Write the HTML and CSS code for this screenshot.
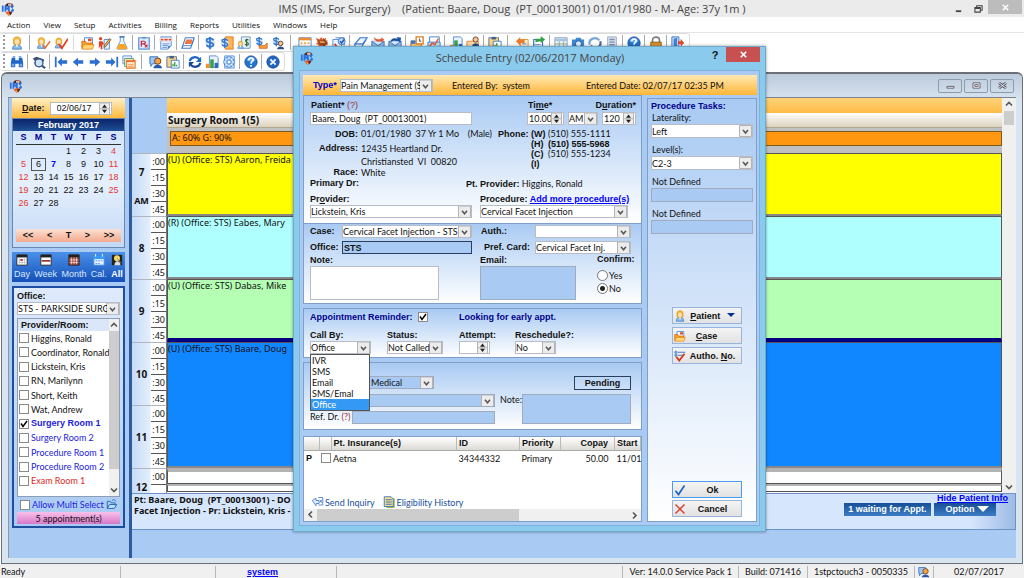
FILE: index.html
```html
<!DOCTYPE html>
<html lang="en">
<head>
<meta charset="utf-8">
<title>IMS (IMS, For Surgery)</title>
<link rel="stylesheet" href="styles.css">
</head>
<body>
<svg class="sprite" aria-hidden="true">
  <symbol id="logo" viewBox="0 0 16 16"><path d="M5 3l3-2 5 1 1 3-9 0z" fill="#3a2a28"/><path d="M8 2h4v3H8z" fill="#f0b8a0"/><path d="M1 4h2v7H1zM4 4h2l1 3 1-3h2v7H8V8l-1 2-1-2v3H4zM15 4h-3l-1 2 2 2-2 2v1h3l1-2-2-2z" fill="#2a6fe0"/><path d="M5 12l5-2 3 2-4 4z" fill="#e8582a"/><path d="M9 12l4-1-2 4z" fill="#3a2a28"/><path d="M7 13h2v2z" fill="#f5c518"/></symbol>
  <symbol id="person" viewBox="0 0 16 16"><path d="M3 15c0-4 2-5 5-5s5 1 5 5z" fill="#8dbbe8" stroke="#3f7fc6"/><path d="M4 9V4c0-4 8-4 8 0v5l-2 1H6z" fill="#f5b82e" stroke="#c98410" stroke-width=".7"/><ellipse cx="8" cy="6.500" rx="2.600" ry="3.200" fill="#fde0b8"/><path d="M6.500 10h3L8 13z" fill="#fff"/></symbol>
  <symbol id="personedit" viewBox="0 0 16 16"><use href="#person" x="-2" width="14" height="16"/><path d="M7 11l2 3 6-8" fill="none" stroke="#e86a2c" stroke-width="1.600"/></symbol>
  <symbol id="personcheck" viewBox="0 0 16 16"><use href="#person" x="-1" width="13" height="16"/><path d="M5 9l4 5 7-11" fill="none" stroke="#e2401c" stroke-width="2"/></symbol>
  <symbol id="folder" viewBox="0 0 16 16"><path d="M4 2h9v8H4z" fill="#fff" stroke="#3f7fd0"/><path d="M8 3h4v3H8z" fill="#e04b2c"/><path d="M1 6h4l1 2h7v6H1z" fill="#f5a623" stroke="#d8631a"/><path d="M3 10h12l-2 5H1z" fill="#ffd873" stroke="#e07a1e" stroke-width=".8"/></symbol>
  <symbol id="runpencil" viewBox="0 0 16 16"><circle cx="3" cy="3" r="1.800" fill="#e2401c"/><path d="M1 6h4l2 3-2 1v5H3v-4l-2 3z" fill="#e2401c"/><path d="M7 4h6v11H7z" fill="#eaf2ff" stroke="#4a86d8"/><path d="M7 11l6-8 2 1-6 8-2 1z" fill="#f7a530" stroke="#444" stroke-width=".7"/></symbol>
  <symbol id="flask" viewBox="0 0 16 16"><path d="M6 1h4v5l4 8-1 1H3l-1-1 4-8z" fill="#eaf4ff" stroke="#5c8fd0"/><path d="M5 9h6l3 5-1 1H3l-1-1z" fill="#ffa51f"/><path d="M5 1h6" stroke="#3e74b8" stroke-width="1.500"/></symbol>
  <symbol id="rx" viewBox="0 0 16 16"><path d="M2 2h12v13H2z" fill="#dbe9fb" stroke="#5d93d8" stroke-width="1.400"/><path d="M6 1h4v2H6z" fill="#5d93d8"/><path d="M5 12V6h3c2 0 2 3 0 3H5m3 0l4 4m0-3l-3 3" fill="none" stroke="#c8283c" stroke-width="1.400"/></symbol>
  <symbol id="doc" viewBox="0 0 16 16"><path d="M2 1h12v10l-4 4H2z" fill="#eef4ff" stroke="#4c84d4"/><path d="M1 2h14v4H1z" fill="#fff" stroke="#9cb8e0" stroke-width=".5"/><path d="M2 4h3m1 0h4m1 0h3" stroke="#e0452c" stroke-width="2"/><path d="M4 9h8M4 11h6M4 13h5" stroke="#4c84d4"/><path d="M10 15v-4h4z" fill="#4c84d4"/></symbol>
  <symbol id="book" viewBox="0 0 16 16"><path d="M5 2h10l-4 12H1z" fill="#fff" stroke="#3f7fd0" stroke-width="1.200"/><path d="M6 4h7l-1 5H4z" fill="#ee7740"/><path d="M1 14l2-3h9l3-8" fill="none" stroke="#3f7fd0"/></symbol>
  <symbol id="dollar" viewBox="0 0 16 16"><path d="M8 0l6 8-6 8-6-8z" fill="#cfe3fb"/><path d="M12 5c-1-3-8-3-8 0s8 2 8 5-7 3-8 0M8 1v14" fill="none" stroke="#2f76cf" stroke-width="1.900"/></symbol>
  <symbol id="dollardoc" viewBox="0 0 16 16"><path d="M6 1h9v14H6z" fill="#ffb552" stroke="#e0701c"/><use href="#dollar" x="-1" y="1" width="13" height="14"/></symbol>
  <symbol id="dollarperson" viewBox="0 0 16 16"><path d="M5 1h10v13H5z" fill="#e9f1fc" stroke="#6c8fbd"/><path d="M13 5c-1-2-4-1-3 1s3 1 3 3-3 2-4 0M11 3v9" fill="none" stroke="#246b34" stroke-width="1.200"/><use href="#person" x="-1" y="5" width="10" height="10"/></symbol>
  <symbol id="dollarhand" viewBox="0 0 16 16"><use href="#dollar" width="12" height="13"/><path d="M6 11h6l3-3v6H6z" fill="#f6a343" stroke="#d8631a"/></symbol>
  <symbol id="dollarman" viewBox="0 0 16 16"><use href="#dollar" width="12" height="13"/><path d="M7 15c0-4 8-4 8 0z" fill="#2d4f86"/><circle cx="11" cy="8.500" r="2.600" fill="#f8c495" stroke="#5b3820"/></symbol>
  <symbol id="calendar" viewBox="0 0 16 16"><path d="M1 2h14v12H1z" fill="#fff" stroke="#4c84d4"/><path d="M1 2h14v3H1z" fill="#ee8a30"/><path d="M3 7h2v2H3zm4 0h2v2H7zm4 0h2v2h-2zM3 11h2v2H3zm4 0h2v2H7z" fill="#f0a23c"/></symbol>
  <symbol id="sparks" viewBox="0 0 16 16"><path d="M1 2l4 2 2-3 2 3 4-2-1 3h3l-3 3 3 2-4 1 2 4-5-2-4 2v-5l-3-1 2-2z" fill="#e4572e"/><path d="M3 5h6V2l6 6-6 5v-3H5z" fill="#8a4a22"/><path d="M5 6h5l2 2H6z" fill="#f5a040"/></symbol>
  <symbol id="clipcheck" viewBox="0 0 16 16"><path d="M1 4h10v11H1zM4 2h10v9" fill="#eef5ff" stroke="#4c84d4"/><circle cx="11" cy="6" r="4" fill="#bcd9fa" stroke="#3172cc"/><path d="M9 6l2 2 3-4" fill="none" stroke="#1c4f9c" stroke-width="1.500"/><path d="M3 9l3 4" stroke="#e2401c" stroke-width="2"/></symbol>
  <symbol id="eraser" viewBox="0 0 16 16"><path d="M7 2h8l-5 7H1zM1 9v3h8l5-8" fill="#e6f1ff" stroke="#3a78cc" stroke-width="1.400"/></symbol>
  <symbol id="mail" viewBox="0 0 16 16"><path d="M1 6h14v9H1z" fill="#8fbdf0" stroke="#2e6cc0"/><path d="M1 6l7 5 7-5" fill="#d8e9fc" stroke="#2e6cc0"/><path d="M3 1c3 3 5 3 9 2l-1-2 4 3-3 4v-2C8 7 4 6 3 1z" fill="#e4572e"/></symbol>
  <symbol id="mailblue" viewBox="0 0 16 16"><path d="M1 6h14v9H1z" fill="#8fbdf0" stroke="#2e6cc0"/><path d="M1 6l7 5 7-5" fill="#d8e9fc" stroke="#2e6cc0"/><path d="M3 7c0-5 5-5 8-4l-1-2 5 1-1 5-2-1C8 5 6 5 3 7z" fill="#1c4f9c"/></symbol>
  <symbol id="folderclock" viewBox="0 0 16 16"><path d="M1 6h12v8H1z" fill="#ffd27a" stroke="#d8631a"/><path d="M7 1h8v8H7z" fill="#fff" stroke="#e07a1e" stroke-width="1.500"/><path d="M11 3v3h2" stroke="#333" fill="none"/><path d="M1 5h5v4H1z" fill="#3a78cc"/></symbol>
  <symbol id="mailchart" viewBox="0 0 16 16"><path d="M3 1h11v13H3z" fill="#fff" stroke="#3a78cc"/><path d="M1 7h14v8H1z" fill="#bfe0f8" stroke="#3a78cc"/><path d="M3 12l3-4 3 2 4-7" fill="none" stroke="#e4572e" stroke-width="1.600"/></symbol>
  <symbol id="chart" viewBox="0 0 16 16"><path d="M5 1h8l2 2v11H5z" fill="#eaf2fd" stroke="#4c84d4"/><path d="M1 10h4v5H1z" fill="#f0932c"/><path d="M6 5h4v10H6z" fill="#36a14a"/><path d="M11 9h4v6h-4z" fill="#2e6cc0"/></symbol>
  <symbol id="card" viewBox="0 0 16 16"><path d="M1 6h13v8H1z" fill="#ffd9a8" stroke="#e07a1e"/><path d="M7 12c0-5 8-5 8 0z" fill="#2d4f86"/><circle cx="11" cy="4" r="3" fill="#f8c495" stroke="#5b3820"/></symbol>
  <symbol id="clip" viewBox="0 0 16 16"><path d="M1 2h11v12H1z" fill="#ffd37a" stroke="#4c6c9c"/><path d="M4 1h5v3H4z" fill="#43618e"/><path d="M6 6h9v9H6z" fill="#fff" stroke="#3a78cc"/><path d="M8 13v-3m2 3V8m2 5v-2" stroke="#36a14a" stroke-width="1.500"/></symbol>
  <symbol id="undo" viewBox="0 0 16 16"><path d="M6 4h9v11H6z" fill="#fff0d8" stroke="#e08a2c"/><path d="M1 6l5-5v3h5v4H6v3z" fill="#ee7a2c"/><path d="M8 9h5m-5 3h5" stroke="#3a78cc"/></symbol>
  <symbol id="redo" viewBox="0 0 16 16"><path d="M2 4h10v11H2z" fill="#fff" stroke="#3a78cc" stroke-width="1.400"/><path d="M4 7V3h6V0l5 4-5 4V6z" fill="#35a04a"/><path d="M3 10h7m-7 3h7" stroke="#3a78cc"/></symbol>
  <symbol id="table" viewBox="0 0 16 16"><path d="M1 2h14v12H1z" fill="#eef5fb" stroke="#7f9cbd"/><path d="M1 3h14v3H1z" fill="#a8c4dd"/><path d="M1 9h14M6 6v8m5-8v8" stroke="#8bab90"/></symbol>
  <symbol id="camera" viewBox="0 0 16 16"><path d="M1 4h4l1-2h5l1 2h3v10H1z" fill="#3b86cf"/><circle cx="8.500" cy="9" r="3.500" fill="#d8ecff" stroke="#1f4f8a"/></symbol>
  <symbol id="swirl" viewBox="0 0 16 16"><path d="M2 10c-2-7 7-10 11-5" fill="none" stroke="#7ba7d8" stroke-width="2.500"/><path d="M14 6c2 7-6 10-11 5" fill="none" stroke="#506f98" stroke-width="2.500"/></symbol>
  <symbol id="sheet" viewBox="0 0 16 16"><path d="M3 1h10v14H3z" fill="#d6e0ec" stroke="#9aabc0"/><path d="M5 4h6M5 7h6M5 10h6" stroke="#7890b0" stroke-width="1.500"/></symbol>
  <symbol id="help" viewBox="0 0 16 16"><circle cx="8" cy="8" r="7" fill="#2272cf" stroke="#184a96"/><path d="M3 6c1-5 9-5 10 0-3 2-7 2-10 0z" fill="#6fb1f0"/><path d="M5.500 6c0-4 5.500-3 5 0-.5 2-2.500 1.500-2.500 4" fill="none" stroke="#fff" stroke-width="1.800"/><path d="M7 11.500h2v2H7z" fill="#fff"/></symbol>
  <symbol id="lock" viewBox="0 0 16 16"><path d="M4 8V5c0-5 8-5 8 0v3" fill="none" stroke="#7a7a7a" stroke-width="1.800"/><path d="M2 7h12v8H2z" fill="#d8942e" stroke="#8a5a18"/></symbol>
  <symbol id="exit" viewBox="0 0 16 16"><path d="M1 1h8v14H1z" fill="#cfe2fa" stroke="#2e6cc0"/><path d="M3 3l4-1v13l-4-1z" fill="#3f83d8"/><path d="M8 6h3V3l4 5-4 4V9H8z" fill="#e4462c"/></symbol>
  <symbol id="binoc" viewBox="0 0 16 16"><path d="M2 3h4v3h4V3h4l1 6v5h-5v-4H6v4H1V9z" fill="#1f66c8"/><path d="M3 1h3v2H3zm7 0h3v2h-3zM2 10h3v3H2zm9 0h3v3h-3z" fill="#74abee"/></symbol>
  <symbol id="lens" viewBox="0 0 16 16"><path d="M1 4l4-2 9 3-1 3-8 1z" fill="#3a4f78"/><path d="M2 8l10 1-2 5-6-1z" fill="#5f86bd"/><circle cx="8" cy="9" r="4.500" fill="#cfe2f6" stroke="#33507f" stroke-width="1.400"/><path d="M11 12l4 3" stroke="#33507f" stroke-width="2.400"/></symbol>
  <symbol id="first" viewBox="0 0 16 16"><path d="M2 2v12" stroke="#2a6fd2" stroke-width="2"/><path d="M4 8l5-5v3h6v4H9v3z" fill="#2a6fd2"/></symbol>
  <symbol id="prev" viewBox="0 0 16 16"><path d="M2 8l6-5v3h6v4H8v3z" fill="#2a6fd2"/></symbol>
  <symbol id="next" viewBox="0 0 16 16"><path d="M14 8L8 3v3H2v4h6v3z" fill="#2a6fd2"/></symbol>
  <symbol id="last" viewBox="0 0 16 16"><path d="M14 2v12" stroke="#2a6fd2" stroke-width="2"/><path d="M12 8L7 3v3H1v4h6v3z" fill="#2a6fd2"/></symbol>
  <symbol id="windows" viewBox="0 0 16 16"><path d="M1 1h10v9H1z" fill="#e6f0fc" stroke="#5c8fd0"/><path d="M3 4h10v9H3z" fill="#fff" stroke="#4a9a5a"/><path d="M5 6h10v9H5z" fill="#ffe3c4" stroke="#e67828" stroke-width="1.200"/><path d="M5 6h10v2H5z" fill="#e67828"/><path d="M7 11h6m-6 2h6" stroke="#e89a50"/></symbol>
  <symbol id="chat" viewBox="0 0 16 16"><path d="M1 2h9v8H4l-2 3v-3H1z" fill="#9cc6f4" stroke="#2e6cc0"/><circle cx="10" cy="7" r="3.600" fill="#f6a343" stroke="#5b3820"/><path d="M5 15c1-5 9-5 10 0z" fill="#245bb0"/></symbol>
  <symbol id="refresh" viewBox="0 0 16 16"><path d="M2 7c1-5 8-6 11-2" fill="none" stroke="#1f66c8" stroke-width="2.600"/><path d="M15 2v6H9z" fill="#1f66c8"/><path d="M14 9c-1 5-8 6-11 2" fill="none" stroke="#164a96" stroke-width="2.600"/><path d="M1 14V8h6z" fill="#164a96"/></symbol>
  <symbol id="globe" viewBox="0 0 16 16"><path d="M3 1h11v14H3z" fill="#d6e8fc" stroke="#5c93dc"/><circle cx="8" cy="8" r="6" fill="#a6cbf5" stroke="#3a78cc"/><path d="M8 2v12M2 8h12M4 4l8 8m0-8l-8 8" stroke="#fff"/><circle cx="8" cy="8" r="2.500" fill="none" stroke="#3a78cc"/></symbol>
  <symbol id="stop" viewBox="0 0 16 16"><circle cx="8" cy="8" r="7" fill="#1f66c8" stroke="#123f88"/><path d="M5 5l6 6m0-6l-6 6" stroke="#fff" stroke-width="2"/></symbol>
  <symbol id="daycal" viewBox="0 0 14 14"><path d="M1 1h12v12H1z" fill="#fff" stroke="#222"/><path d="M1 1h12v3H1z" fill="#222"/><path d="M4 4v8m3-8v8m3-8v8M2 7h10M2 10h10" stroke="#9aa" stroke-width=".6"/><path d="M5 6h3v2H5z" fill="#c33"/></symbol>
  <symbol id="weekcal" viewBox="0 0 14 14"><path d="M1 1h12v12H1z" fill="#fff" stroke="#222"/><path d="M1 1h12v3H1z" fill="#222"/><path d="M2 7h10v2H2z" fill="#a0342c"/></symbol>
  <symbol id="monthcal" viewBox="0 0 14 14"><path d="M1 1h12v12H1z" fill="#a9453a" stroke="#222"/><path d="M1 1h12v3H1z" fill="#222"/><path d="M4 4v8m3-8v8m3-8v8M2 7h10M2 10h10" stroke="#fff" stroke-width=".7"/></symbol>
  <symbol id="bluecal" viewBox="0 0 14 14"><path d="M1 3h12v10H1z" fill="#eaf4ff" stroke="#3b8cf0"/><path d="M1 2h12v4H1z" fill="#3b9af8"/><path d="M3 0v3m8-3v3" stroke="#fff"/><path d="M3 8h2m1 0h2m1 0h2M3 11h2m1 0h2" stroke="#3b8cf0"/></symbol>
  <symbol id="allcal" viewBox="0 0 14 14"><path d="M1 1h12v12H1z" fill="#222"/><circle cx="7" cy="5" r="3.500" fill="#f6d860"/><path d="M4 13c0-6 7-6 7 0z" fill="#ddd"/><path d="M7 5l5 6" stroke="#888"/></symbol>
  <symbol id="openfolder" viewBox="0 0 14 14"><path d="M1 3h4l1 2h5v3M1 3v9l3-5h9l-3 5H1" fill="#bfe0fa" stroke="#1f66b8" stroke-width="1.200"/><path d="M7 2c2-2 4-1 5 1" fill="none" stroke="#1f66b8"/></symbol>
  <symbol id="taskcheck" viewBox="0 0 16 16"><path d="M5 3h10M5 7h7" stroke="#4c7fc0" stroke-width="1.500"/><circle cx="2.500" cy="3" r="1.500" fill="#9cc6f4" stroke="#2e6cc0"/><circle cx="2.500" cy="7" r="1.500" fill="#9cc6f4" stroke="#2e6cc0"/><path d="M3 9l4 5 7-9" fill="none" stroke="#d0341c" stroke-width="2.400"/></symbol>
  <symbol id="okcheck" viewBox="0 0 16 16"><path d="M2 9l4 5 8-12" fill="none" stroke="#1c62c4" stroke-width="2.200"/></symbol>
  <symbol id="cross" viewBox="0 0 16 16"><path d="M2 2l12 12M14 2L2 14" stroke="#d8402c" stroke-width="1.900"/></symbol>
  <symbol id="inquiry" viewBox="0 0 16 16"><path d="M1 6l5-3v3h4v4H6v3z" fill="#e4f0ff" stroke="#2e6cd0"/><path d="M9 2h6v10H9M11 5l3 4m0-4l-3 4" fill="none" stroke="#2e6cd0"/></symbol>
  <symbol id="history" viewBox="0 0 16 16"><path d="M4 3h11v13H4z" fill="#9bbf5a"/><path d="M1 1h9l3 3v10H1z" fill="#fbe08a" stroke="#356fc0" stroke-width="1.200"/><path d="M3 5h8M3 8h8M3 11h8" stroke="#356fc0" stroke-width="1.300"/></symbol>
</svg>

<header class="titlebar">
  <svg class="app-logo"><use href="#logo"/></svg>
  <h1>IMS (IMS, For Surgery) &nbsp;&nbsp; (Patient: Baare, Doug &nbsp;(PT_00013001) 01/01/1980 - M- Age: 37y 1m )</h1>
  <div class="window-buttons">
    <button aria-label="Minimize"><svg viewBox="0 0 10 10"><path d="M2 8h6" stroke="#444" stroke-width="2"/></svg></button>
    <button aria-label="Restore"><svg viewBox="0 0 10 10"><path d="M1 4h6v5H1zM3 4V2h6v5H7M1 5h6" fill="none" stroke="#444" stroke-width="1.200"/></svg></button>
    <button class="close" aria-label="Close"><svg viewBox="0 0 10 10"><path d="M2 2l6 6M8 2L2 8" stroke="#fff" stroke-width="1.600"/></svg></button>
  </div>
</header>

<nav class="menubar">
  <button>Action</button><button>View</button><button>Setup</button><button>Activities</button><button>Billing</button><button>Reports</button><button>Utilities</button><button>Windows</button><button>Help</button>
</nav>

<div class="toolbars">
  <div class="toolbar" role="toolbar" aria-label="Main">
    <button aria-label="Patient"><svg><use href="#person"/></svg></button><i class="wide"></i>
    <button aria-label="Edit patient"><svg><use href="#personedit"/></svg></button>
    <button aria-label="Check in"><svg><use href="#personcheck"/></svg></button><i class="wide none"></i>
    <button aria-label="Case folder"><svg><use href="#folder"/></svg></button>
    <button aria-label="Visit"><svg><use href="#runpencil"/></svg></button>
    <button aria-label="Lab"><svg><use href="#flask"/></svg></button><i></i>
    <button aria-label="Prescription"><svg><use href="#rx"/></svg></button><i></i>
    <button aria-label="Document"><svg><use href="#doc"/></svg></button><i></i>
    <button aria-label="Notes"><svg><use href="#book"/></svg></button><i></i>
    <button aria-label="Charge"><svg><use href="#dollar"/></svg></button>
    <button aria-label="Bill"><svg><use href="#dollardoc"/></svg></button>
    <button aria-label="Account"><svg><use href="#dollarperson"/></svg></button>
    <button aria-label="Payment"><svg><use href="#dollarhand"/></svg></button>
    <button aria-label="Payer"><svg><use href="#dollarman"/></svg></button><i class="wide"></i>
    <button aria-label="Schedule"><svg><use href="#calendar"/></svg></button>
    <button aria-label="Tasks"><svg><use href="#sparks"/></svg></button>
    <button aria-label="Review"><svg><use href="#clipcheck"/></svg></button><i></i>
    <button aria-label="Erase"><svg><use href="#eraser"/></svg></button>
    <button aria-label="Inbox"><svg><use href="#mail"/></svg></button>
    <button aria-label="Outbox"><svg><use href="#mailblue"/></svg></button><i></i>
    <button aria-label="Reminder"><svg><use href="#folderclock"/></svg></button>
    <button aria-label="Mail chart"><svg><use href="#mailchart"/></svg></button><i></i>
    <button aria-label="Reports"><svg><use href="#chart"/></svg></button>
    <button aria-label="Card"><svg><use href="#card"/></svg></button><i></i>
    <button aria-label="Clipboard"><svg><use href="#clip"/></svg></button><i class="wide"></i>
    <button aria-label="Import"><svg><use href="#undo"/></svg></button>
    <button aria-label="Export"><svg><use href="#redo"/></svg></button><i></i>
    <button aria-label="Table"><svg><use href="#table"/></svg></button>
    <button aria-label="Camera"><svg><use href="#camera"/></svg></button>
    <button aria-label="Sync"><svg><use href="#swirl"/></svg></button>
    <button aria-label="Sheet"><svg><use href="#sheet"/></svg></button><i></i>
    <button aria-label="Help"><svg><use href="#help"/></svg></button><i></i>
    <button aria-label="Lock"><svg><use href="#lock"/></svg></button><i></i>
    <button aria-label="Exit"><svg><use href="#exit"/></svg></button>
  </div>
  <div class="toolbar" role="toolbar" aria-label="Schedule">
    <button aria-label="Find"><svg><use href="#binoc"/></svg></button><i></i>
    <button aria-label="Preview"><svg><use href="#lens"/></svg></button><i></i>
    <button aria-label="First"><svg><use href="#first"/></svg></button>
    <button aria-label="Previous"><svg><use href="#prev"/></svg></button>
    <button aria-label="Next"><svg><use href="#next"/></svg></button>
    <button aria-label="Last"><svg><use href="#last"/></svg></button>
    <button aria-label="Windows"><svg><use href="#windows"/></svg></button><i class="wide"></i>
    <button aria-label="Chat"><svg><use href="#chat"/></svg></button>
    <button aria-label="Clipboard"><svg><use href="#clip"/></svg></button><i></i>
    <button aria-label="Refresh"><svg><use href="#refresh"/></svg></button>
    <button aria-label="Chart"><svg><use href="#chart"/></svg></button>
    <button aria-label="Web"><svg><use href="#globe"/></svg></button><i></i>
    <button aria-label="Help"><svg><use href="#help"/></svg></button><i></i>
    <button aria-label="Close view"><svg><use href="#stop"/></svg></button>
  </div>
</div>

<main class="mdi">
  <div class="mdi-title">
    <svg class="app-logo"><use href="#logo"/></svg>
    <div class="mdi-buttons">
      <button aria-label="Minimize view"><svg viewBox="0 0 10 8"><path d="M1 5h8v2H1z" fill="#fff" stroke="#556"/></svg></button>
      <button aria-label="Restore view"><svg viewBox="0 0 10 8"><path d="M1 1h8v6H1zM3 3h4v2H3z" fill="#fff" stroke="#556"/></svg></button>
      <button aria-label="Close child view"><svg viewBox="0 0 10 8"><path d="M1 1l8 6M9 1L1 7" stroke="#556" stroke-width="3"/><path d="M1 1l8 6M9 1L1 7" stroke="#fff"/></svg></button>
    </div>
  </div>
  <div class="workspace">
    <aside class="sidebar">
      <div class="date-bar"><label for="date"><u>D</u>ate:</label><span class="spin"><input id="date" value="02/06/17"></span></div>
      <section class="calendar">
        <h2>February 2017</h2>
        <table>
          <thead><tr><th>S</th><th>M</th><th>T</th><th>W</th><th>T</th><th>F</th><th>S</th></tr></thead>
          <tbody>
            <tr><td></td><td></td><td></td><td>1</td><td>2</td><td>3</td><td>4</td></tr>
            <tr><td>5</td><td class="picked"><span>6</span></td><td class="today">7</td><td>8</td><td>9</td><td>10</td><td>11</td></tr>
            <tr><td>12</td><td>13</td><td>14</td><td>15</td><td>16</td><td>17</td><td>18</td></tr>
            <tr><td>19</td><td>20</td><td>21</td><td>22</td><td>23</td><td>24</td><td>25</td></tr>
            <tr><td>26</td><td>27</td><td>28</td><td></td><td></td><td></td><td></td></tr>
          </tbody>
        </table>
        <div class="cal-nav"><button>&lt;&lt;</button><button>&lt;</button><button>T</button><button>&gt;</button><button>&gt;&gt;</button></div>
      </section>
      <div class="views">
        <button><svg><use href="#daycal"/></svg>Day</button>
        <button><svg><use href="#weekcal"/></svg>Week</button>
        <button><svg><use href="#monthcal"/></svg>Month</button>
        <button><svg><use href="#bluecal"/></svg>Cal.</button>
        <button class="on"><svg><use href="#allcal"/></svg>All</button>
      </div>
      <section class="rooms">
        <label class="b" for="office">Office:</label>
        <select id="office"><option>STS - PARKSIDE SURGICAL</option></select>
        <div class="room-box">
          <div class="room-list">
            <h3>Provider/Room:</h3>
            <label><input type="checkbox">Higgins, Ronald</label>
            <label><input type="checkbox">Coordinator, Ronald</label>
            <label><input type="checkbox">Lickstein, Kris</label>
            <label><input type="checkbox">RN, Marilynn</label>
            <label><input type="checkbox">Short, Keith</label>
            <label><input type="checkbox">Wat, Andrew</label>
            <label class="blue b"><input type="checkbox" checked>Surgery Room 1</label>
            <label class="blue"><input type="checkbox">Surgery Room 2</label>
            <label class="blue"><input type="checkbox">Procedure Room 1</label>
            <label class="blue"><input type="checkbox">Procedure Room 2</label>
            <label class="red"><input type="checkbox">Exam Room 1</label>
          </div>
          <div class="vscroll"><span class="up"></span><span class="thumb"></span><span class="down"></span></div>
        </div>
        <label class="multi blue"><input type="checkbox">Allow Multi Select <svg><use href="#openfolder"/></svg></label>
        <button class="count">5 appointment(s)</button>
      </section>
    </aside>

    <div class="board">
      <div class="schedule">
        <div class="times">
          <div class="corner"></div>
          <div class="hour"><b>7<small>AM</small></b><span>:00</span><span>:15</span><span>:30</span><span>:45</span></div>
          <div class="hour"><b>8</b><span>:00</span><span>:15</span><span>:30</span><span>:45</span></div>
          <div class="hour"><b>9</b><span>:00</span><span>:15</span><span>:30</span><span>:45</span></div>
          <div class="hour"><b>10</b><span>:00</span><span>:15</span><span>:30</span><span>:45</span></div>
          <div class="hour"><b>11</b><span>:00</span><span>:15</span><span>:30</span><span>:45</span></div>
          <div class="hour cut"><b>12</b><span>:00</span></div>
        </div>
        <div class="lane">
          <div class="lane-top"></div>
          <h2>Surgery Room 1(5)</h2>
          <div class="usage"><div>A: 60% G: 90%</div></div>
          <div class="appt yellow">(U) (Office: STS) Aaron, Freida</div>
          <div class="appt cyan">(R) (Office: STS) Eabes, Mary</div>
          <div class="appt green">(U) (Office: STS) Dabas, Mike</div>
          <div class="appt azure">(U) (Office: STS) Baare, Doug</div>
          <div class="slot"></div>
          <div class="slot thin"></div>
        </div>
        <div class="vscroll tall"><span class="up"></span><span class="thumb"></span><span class="down"></span></div>
      </div>
      <div class="info">
        <p>Pt: Baare, Doug &nbsp;(PT_00013001) - DO<br>Facet Injection - Pr: Lickstein, Kris -</p>
        <div class="info-actions">
          <a href="#">Hide Patient Info</a>
          <div><button>1 waiting for Appt.</button><button class="option">Option <span class="tri"></span></button></div>
        </div>
      </div>
      <div class="board-foot"></div>
    </div>
  </div>
</main>

<footer class="status">
  <span class="s1">Ready</span><span class="s2"></span><span class="s3"><a href="#">system</a></span><span class="s4"></span><span>Ver: 14.0.0 Service Pack 1</span><span>Build: 071416</span><span>1stpctouch3 - 0050335</span><span class="s5"><svg><use href="#chat"/></svg></span><span class="s6">02/07/2017</span>
</footer>

<div class="dialog" role="dialog" aria-labelledby="dlg-title">
  <div class="dlg-head">
    <svg class="app-logo"><use href="#logo"/></svg>
    <h2 id="dlg-title">Schedule Entry (02/06/2017 Monday)</h2>
    <button class="ask" aria-label="Help">?</button>
    <button class="close" aria-label="Close dialog"><svg viewBox="0 0 10 10"><path d="M2 2l6 6M8 2L2 8" stroke="#fff" stroke-width="1.800"/></svg></button>
  </div>
  <form class="dlg-body">
    <div class="type-bar">
      <label for="type">Type*</label>
      <select id="type"><option>Pain Management (S)</option></select>
      <span class="by">Entered By:&nbsp; system</span>
      <span>Entered Date: 02/07/17 02:35 PM</span>
    </div>
    <div class="dlg-cols">
      <div class="left">
        <section class="panel who">
          <div class="row-head">
            <div class="field pt"><label for="patient">Patient* <em>(?)</em></label><input id="patient" value="Baare, Doug  (PT_00013001)"></div>
            <div class="field"><label for="time">Ti<u>m</u>e*</label><span class="spin"><input id="time" value="10.00"></span></div>
            <div class="field"><label class="vh" for="ampm">AM/PM</label><select id="ampm"><option>AM</option></select></div>
            <div class="field dur"><label for="dur">D<u>u</u>ration*</label><span class="spin"><input id="dur" value="120"></span></div>
          </div>
          <div class="facts">
            <dl class="person">
              <dt>DOB:</dt><dd>01/01/1980 &nbsp;37 Yr 1 Mo <span>(Male)</span></dd>
              <dt>Address:</dt><dd>12435 Heartland Dr.</dd>
              <dt></dt><dd>Christiansted &nbsp;VI &nbsp;00820</dd>
              <dt>Race:</dt><dd>White</dd>
            </dl>
            <dl class="phones">
              <dt>Phone:</dt><dd><b>(W)</b>(510) 555-1111</dd>
              <dt></dt><dd class="b"><b>(H)</b>(510) 555-5968</dd>
              <dt></dt><dd><b>(C)</b>(510) 555-1234</dd>
              <dt></dt><dd><b>(I)</b></dd>
            </dl>
          </div>
          <div class="drs"><b>Primary Dr:</b><span><b>Pt. Provider:</b> Higgins, Ronald</span></div>
          <div class="row-prov">
            <div class="field"><label for="prov">Pr<u>o</u>vider:</label><select id="prov"><option>Lickstein, Kris</option></select></div>
            <div class="field"><span class="lab"><label for="proc">Procedure:</label> <a href="#">Add more procedure(s)</a></span><select id="proc"><option>Cervical Facet Injection</option></select></div>
          </div>
        </section>

        <section class="panel case">
          <div class="case-grid">
            <label for="case">Case:</label><select id="case"><option>Cervical Facet Injection - STS</option></select>
            <label class="c3" for="auth">Auth.:</label><select id="auth"><option></option></select>
            <label for="off">Office:</label><input id="off" class="sts" value="STS">
            <label class="c3 r" for="pref">Pref. Card:</label><select id="pref"><option>Cervical Facet Inj.</option></select>
          </div>
          <div class="notes">
            <div class="field"><label for="note">Note:</label><textarea id="note"></textarea></div>
            <div class="field"><label for="email">Email:</label><textarea id="email" class="dim"></textarea></div>
            <fieldset><legend>Confirm:</legend><label><input type="radio" name="cf">Yes</label><label><input type="radio" name="cf" checked>No</label></fieldset>
          </div>
        </section>

        <section class="panel remind">
          <div class="remind-top"><label>Appointment Reminder: <input type="checkbox" checked></label><span>Looking for early appt.</span></div>
          <div class="remind-row">
            <div class="field drop">
              <label for="callby">Call By:</label><select id="callby"><option>Office</option></select>
              <ul class="menu" role="listbox" aria-label="Call By options"><li role="option">IVR</li><li role="option">SMS</li><li role="option">Email</li><li role="option">SMS/Emal</li><li role="option" aria-selected="true">Office</li></ul>
            </div>
            <div class="field"><label for="stat">Status:</label><select id="stat"><option>Not Called</option></select></div>
            <div class="field"><label for="att">Attempt:</label><span class="spin"><input id="att" value=""></span></div>
            <div class="field"><label for="res">Reschedule?:</label><select id="res"><option>No</option></select></div>
          </div>
        </section>

        <section class="panel ref">
          <div class="ref-top"><select class="dim" aria-label="Class"><option>Medical</option></select><button type="button" class="pending">Pending</button></div>
          <div class="ref-grid">
            <select class="dim wide" aria-label="Referral"><option></option></select>
            <label class="ref-note" for="rnote">Note:</label><textarea id="rnote" class="dim"></textarea>
            <label class="ref-dr" for="refdr">Ref. Dr. <em>(?)</em></label><input id="refdr" class="dim">
          </div>
        </section>

        <section class="ins">
          <table>
            <thead><tr><th class="k1"></th><th class="k2"></th><th>Pt. Insurance(s)</th><th class="k4">ID</th><th class="k5">Priority</th><th class="k6 num">Copay</th><th class="k7">Start</th></tr></thead>
            <tbody><tr><td><b>P</b></td><td><input type="checkbox" aria-label="Select Aetna"></td><td>Aetna</td><td>34344332</td><td>Primary</td><td class="num">50.00</td><td>11/01</td></tr></tbody>
          </table>
          <div class="ins-links"><a href="#"><svg><use href="#inquiry"/></svg>Send Inquiry</a><a href="#"><svg><use href="#history"/></svg>Eligibility History</a></div>
          <div class="hscroll"><span class="lt"></span><span class="thumb"></span><span class="rt"></span></div>
        </section>
      </div>

      <div class="tasks">
        <h3>Procedure Tasks:</h3>
        <label for="lat">Laterality:</label><select id="lat"><option>Left</option></select>
        <label for="lev">Level(s):</label><select id="lev"><option>C2-3</option></select>
        <label for="nd1">Not Defined</label><input id="nd1" class="dim">
        <label for="nd2">Not Defined</label><input id="nd2" class="dim">
        <div class="task-buttons">
          <button type="button"><svg><use href="#person"/></svg><span><u>P</u>atient <i class="down-tri"></i></span></button>
          <button type="button"><svg><use href="#folder"/></svg><span class="l"><u>C</u>ase</span></button>
          <button type="button"><svg><use href="#taskcheck"/></svg><span>Autho. <u>N</u>o.</span></button>
        </div>
        <div class="ok-buttons">
          <button type="button" class="ok"><svg><use href="#okcheck"/></svg><span>Ok</span></button>
          <button type="button"><svg><use href="#cross"/></svg><span>Cancel</span></button>
        </div>
      </div>
    </div>
  </form>
</div>
</body>
</html>
```
FILE: styles.css
```css
:root {
  --panel: #a9caf3;
  --line: #7f9fc8;
  --bold: bold 9px/11px "Liberation Sans", sans-serif;
  --chev: url("data:image/svg+xml,%3Csvg xmlns='http://www.w3.org/2000/svg' viewBox='0 0 13 12'%3E%3Cpath d='M.5.5h12v11H.5z' fill='%23ececec' stroke='%23b4b4b4'/%3E%3Cpath d='M4 5l2.500 3L9 5' fill='none' stroke='%23555' stroke-width='1.500'/%3E%3C/svg%3E");
  --spin: url("data:image/svg+xml,%3Csvg xmlns='http://www.w3.org/2000/svg' viewBox='0 0 11 12'%3E%3Cpath d='M.5.5h10v11H.5zM1 6h9' fill='%23eee' stroke='%23b4b4b4'/%3E%3Cpath d='M3 5l2.500-3L8 5zM3 7l2.500 3L8 7z' fill='%23222'/%3E%3C/svg%3E");
  --arr: url("data:image/svg+xml,%3Csvg xmlns='http://www.w3.org/2000/svg' viewBox='0 0 10 10'%3E%3Cpath d='M2 6.500L5 3.500l3 3' fill='none' stroke='%23555' stroke-width='1.600'/%3E%3C/svg%3E");
}
* { box-sizing: border-box; }
body { margin: 0; min-height: 100vh; display: flex; flex-direction: column; position: relative; background: #fff; font: 9px/11px Lato, "Liberation Sans", sans-serif; color: #111; overflow-x: hidden; }
h1, h2, h3, p, dl, dd, ul { margin: 0; padding: 0; }
button, input, select, textarea { font: inherit; color: inherit; margin: 0; padding: 0; border-radius: 0; }
button { border: 0; background: none; white-space: nowrap; }
svg { display: block; }
em { font-style: normal; color: #a03030; font-weight: normal; }
a { color: #00f; }
.b, b { font: var(--bold); }
.blue { color: #1c1ce0; }
.red { color: #e0281c; }
.sprite { position: absolute; width: 0; height: 0; }
.app-logo { width: 14px; height: 14px; }

select, input, textarea { border: 1px solid #b8bcc4; background: #fff; }
select { appearance: none; height: 13px; width: 100%; padding: 0 12px 0 0; background: #fff var(--chev) right center / 13px 12px no-repeat; text-overflow: clip; overflow: hidden; }
input { height: 13px; width: 100%; padding: 0 1px; }
textarea { display: block; resize: none; width: 100%; }
.dim { background-color: #a9caf3; border-color: #a0abbf; }
.spin { display: block; height: 13px; background: var(--spin) right 1px center / 11px 12px no-repeat, #fff; border: 1px solid #b8bcc4; }
.spin input { border: 0; height: 11px; width: calc(100% - 12px); background: none; padding: 0 0 0 1px; display: block; }
input[type="checkbox"] { appearance: none; width: 10px; height: 10px; border: 1px solid #8a8a8a; flex: none; }
input[type="checkbox"]:checked { background: #fff url("data:image/svg+xml,%3Csvg xmlns='http://www.w3.org/2000/svg' viewBox='0 0 8 8'%3E%3Cpath d='M1 3.500l2 3L7 1' fill='none' stroke='%23000' stroke-width='1.500'/%3E%3C/svg%3E") center / 8px 8px no-repeat; }
input[type="radio"] { appearance: none; width: 11px; height: 11px; border: 1px solid #777; border-radius: 50%; }
input[type="radio"]:checked { background: radial-gradient(circle, #222 0 2px, #fff 3px); }

.titlebar { display: flex; align-items: center; height: 17px; background: #ebebeb; padding-left: 1px; }
.titlebar h1 { flex: 1; text-align: center; font: 11px/17px "Open Sans", sans-serif; color: #444; white-space: nowrap; padding-left: 61px; }
.window-buttons { display: flex; align-self: stretch; }
.window-buttons button { width: 20px; display: grid; place-items: center; }
.window-buttons svg { width: 9px; height: 9px; }
.window-buttons .close { width: 34px; margin: 0 2px 3px 0; background: #bcbcbc; }
.menubar { display: flex; height: 16px; gap: 13px; padding: 0 7px; border-bottom: 1px solid #e6e6e6; font: 8px/15px "Open Sans", sans-serif; }
.toolbars { height: 39px; flex: none; display: flex; flex-direction: column; align-items: flex-start; }
.toolbar { display: flex; align-items: center; height: 19px; padding: 0 3px 0 8px; border: 1px solid #dcdcdc; border-left: 0; border-radius: 3px; background: radial-gradient(circle, #999 1px, transparent 1px) 2px 0 / 4px 4px repeat-y; }
.toolbar button { width: 17px; height: 17px; flex: none; display: grid; place-items: center; }
.toolbar svg { width: 14px; height: 14px; }
.toolbar i { flex: none; width: 1px; height: 15px; background: #aaa; margin: 0 2px; }
.toolbar .wide { margin: 0 5px 0 4px; }
.toolbar .none { background: #ddd; }

.mdi { flex: 1; display: flex; flex-direction: column; margin: 0 1px; border: 1px solid #6c7076; border-top-width: 2px; border-radius: 6px 6px 0 0; background: #d8e4f0; padding: 0 6px 5px; }
.mdi-title { height: 23px; display: flex; align-items: center; justify-content: space-between; margin: 0 -6px; padding: 0 8px 0 7px; background: linear-gradient(#bccadb, #d5e1ee); border-radius: 5px 5px 0 0; }
.mdi-buttons { display: flex; gap: 2px; }
.mdi-buttons button { width: 24px; height: 14px; border: 1px solid #8c9bad; border-radius: 2px; display: grid; place-items: center; }
.mdi-buttons svg { width: 9px; height: 7px; }
.workspace { flex: 1; display: flex; background: var(--panel); border-top: 1px solid #7c8490; }

.sidebar { width: 124px; flex: none; padding: 0 4px 0 3px; border-right: 3px solid #2f5b9e; border-left: 1px solid #8b97a8; display: flex; flex-direction: column; }
.date-bar { display: flex; align-items: center; height: 20px; padding-left: 10px; gap: 5px; background: linear-gradient(#fff0c8, #ffb93a); font: bold 9px/12px "Liberation Sans", sans-serif; }
.date-bar .spin { width: 62px; font-weight: normal; }
.date-bar .spin input { padding-left: 6px; }
.calendar { border: 1px solid #6b86ad; height: 130px; background: linear-gradient(#cfe2fb, #e6f0fd 50%, #c3d9f5); padding-bottom: 4px; }
.calendar h2 { font: bold 9px/12px "Liberation Sans", sans-serif; color: #fff; text-align: center; background: linear-gradient(#0a246a, #1f4f94); }
.calendar table { width: calc(100% - 6px); margin: 0 3px; table-layout: fixed; border-collapse: collapse; font: 9px/13px "Liberation Sans", sans-serif; text-align: center; }
.calendar th, .calendar td { padding: 0; height: 13px; }
.calendar th { border-bottom: 1px solid #333; color: #00008b; font-size: 9px; }
.calendar td:first-child, .calendar td:last-child { color: #e8382c; }
.calendar .picked span { display: block; border: 1px solid #555; line-height: 11px; }
.calendar .today { color: #00f; font-weight: bold; }
.cal-nav { display: flex; justify-content: space-around; height: 13px; margin: 19px 3px 0; background: linear-gradient(#fbe0d4, #f5a98c); font: bold 9px/13px "Liberation Sans", sans-serif; }
.views { display: flex; justify-content: space-between; height: 30px; margin-top: 4px; padding: 2px; background: linear-gradient(#4a90e8, #1550b8); color: #d8e8ff; }
.views button { font: 9px/12px "Liberation Sans", sans-serif; display: flex; flex-direction: column; align-items: center; }
.views svg { width: 12px; height: 12px; margin-bottom: 2px; }
.views .on { font-weight: bold; color: #fff; }
.rooms { margin-top: 4px; flex: none; height: 242px; border: 2px solid #1d4f9e; padding: 2px 3px 2px; background: linear-gradient(#dfeafc, #a9caf3); display: flex; flex-direction: column; }
.rooms > .b { line-height: 12px; }
.room-box { flex: 1; margin-top: 3px; display: flex; border: 1px solid #8e9db5; background: #fff; min-height: 0; }
.room-list { flex: 1; display: flex; flex-direction: column; padding-bottom: 8px; min-width: 0; }
.room-list h3 { font: bold 9px/12px "Liberation Sans", sans-serif; padding-left: 3px; background: #dbe7f8; }
.room-list label { flex: 1; display: flex; align-items: center; gap: 2px; padding-left: 1px; white-space: nowrap; }
.multi { display: flex; align-items: center; gap: 2px; height: 15px; padding-left: 3px; white-space: nowrap; }
.multi svg { width: 12px; height: 11px; flex: none; }
.count { height: 12px; background: linear-gradient(#f8c0ea, #d878c8); line-height: 11px; }
.vscroll { width: 10px; flex: none; background: #f0f0f0; display: flex; flex-direction: column; }
.vscroll .up, .vscroll .down { height: 12px; background: var(--arr) center / 10px 10px no-repeat; }
.vscroll .down { transform: rotate(180deg); margin-top: auto; }
.vscroll .thumb { height: 138px; background: #cdcdcd; }

.board { flex: 1; min-width: 0; display: flex; flex-direction: column; }
.schedule { flex: 1 1 0; min-height: 394px; overflow: hidden; display: flex; background: #fff; font: 9px/12px "Noto Sans", sans-serif; }
.times { width: 35px; flex: none; }
.corner { height: 55px; background: var(--panel); }
.hour { height: 63px; display: grid; grid-template: repeat(4, 1fr) / 19px 1fr; border-top: 1px solid #aeb6c2; background: linear-gradient(90deg, #c6dbf8 0, #e4eefc 18px, #fff 19px); border-right: 1px solid #777; }
.hour b { grid-row: 1 / 5; font: bold 10px/12px "Noto Sans", sans-serif; text-align: center; padding-top: 12px; }
.hour b small { display: block; font-size: 9px; padding-top: 17px; }
.hour:nth-child(n+3) b { padding-top: 25px; }
.hour span { text-align: right; padding-right: 1px; line-height: 15px; border-bottom: 1px solid #555; }
.hour span:last-child { border: 0; }
.hour.cut { height: 25px; grid-template-rows: 16px 1fr; }
.hour.cut b { grid-row: 1 / 3; padding-top: 12px; }
.hour.cut span { border-bottom: 1px solid #555; }
.lane { flex: 1; min-width: 0; white-space: nowrap; }
.lane-top { height: 15px; background: linear-gradient(#ffd37a, #ffbb45); }
.lane h2 { font: bold 10px/14px "Noto Sans", sans-serif; padding-left: 1px; background: linear-gradient(#fff, #dcd2bc); border-bottom: 1px solid #b0a890; }
.usage { height: 25px; padding: 3px 0 0 3px; background: #c0c0c0; }
.usage div { height: 15px; background: #ff9810; border: 1px solid #7a5a20; padding-left: 1px; }
.appt { height: 63px; border: 1px solid #555; border-bottom: 2px solid #888; padding-left: 0; }
.yellow { background: #ff0; }
.cyan { background: #b0ffff; }
.green { background: #b4ffb4; border-bottom: 4px solid #000080; }
.azure { background: #1086ff; height: 126px; }
.slot { height: 16px; border: 1px solid #555; border-top: 4px solid #b4b4b4; }
.thin { height: 8px; border-top-width: 2px; }
.tall { width: 14px; }
.tall .thumb { height: 14px; margin: 1px 2px; }
.info { height: 37px; display: flex; justify-content: space-between; border: 1px solid #6f93c4; border-left: 0; background: linear-gradient(90deg, #d6e6fd 95%, #9dbbe4); font: bold 9px/11px "Noto Sans", sans-serif; padding: 0 7px 0 2px; white-space: nowrap; }
.info-actions { display: flex; flex-direction: column; align-items: flex-end; font: bold 9px/9px "Liberation Sans", sans-serif; flex: none; }
.info-actions div { display: flex; gap: 3px; padding-right: 12px; }
.info-actions button { height: 13px; padding: 0 4px; color: #fff; background: linear-gradient(#164f96, #3d7cc4); }
.info-actions .option { padding: 0 7px 0 12px; }
.tri { display: inline-block; border: 6px solid transparent; border-top-color: #fff; border-bottom: 0; }
.board-foot { height: 28px; }

.status { height: 14px; display: flex; border-top: 2px solid #ededed; background: #f0f0f0; line-height: 12px; white-space: nowrap; }
.status span { border-right: 1px solid #b8b8b8; padding: 0 6px; }
.status .s1 { width: 121px; padding: 0 1px; }
.status .s2 { width: 95px; }
.status .s3 { width: 121px; padding-left: 31px; font: bold 9px/12px "Liberation Sans", sans-serif; }
.status .s4 { flex: 1; }
.status .s5 { padding: 0 3px; }
.status .s5 svg { width: 12px; height: 12px; }
.status .s6 { width: 90px; text-align: center; border: 0; }

.dialog { position: absolute; left: 293px; top: 46px; width: 473px; background: #8acaec; border: 1px solid #6fa9cc; padding: 0 5px 5px; box-shadow: 0 0 3px rgba(0, 0, 0, .4); }
.dlg-head { height: 23px; display: flex; align-items: flex-start; }
.dlg-head .app-logo { margin: 4px 0 0 1px; }
.dlg-head h2 { flex: 1; text-align: center; font: 11px/22px "Open Sans", sans-serif; color: #444; padding-left: 42px; }
.dlg-head .ask { font: bold 11px/16px "Liberation Sans", sans-serif; width: 22px; }
.dlg-head .close { width: 34px; height: 15px; background: #c75050; display: grid; place-items: center; }
.dlg-head .close svg { width: 9px; height: 9px; }
.dlg-body { border: 1px solid #7fb0dc; background: var(--panel); padding: 4px 2px 3px 3px; }
.type-bar { height: 20px; display: flex; align-items: center; padding-left: 10px; background: linear-gradient(#ffe9b4, #ffb637); }
.type-bar label { font: bold 9px/12px "Liberation Sans", sans-serif; color: #00c; width: 27px; }
.type-bar select { width: 93px; }
.type-bar .by { width: 134px; margin-left: 19px; }
.dlg-cols { display: flex; gap: 5px; }
.left { flex: 1; min-width: 0; }
.panel { border: 1px solid var(--line); background: linear-gradient(#a9caf3, #fff); padding: 0 7px 0 6px; }
.field { display: block; }
.field label, .lab, .case-grid label, legend { display: block; font: var(--bold); white-space: nowrap; }
.field .vh { visibility: hidden; }
.field .lab label { display: inline; padding: 0; }
.who { height: 129px; padding-top: 4px; }
.row-head { display: grid; grid-template-columns: 213px 37px 30px 34px; column-gap: 4px; }
.row-head label { height: 12px; padding-left: 1px; }
.pt input { width: 162px; }
.dur label { display: flex; justify-content: flex-end; }
.facts { display: flex; margin-top: 2px; line-height: 10px; white-space: nowrap; }
.person { width: 187px; display: grid; grid-template-columns: 48px 1fr; column-gap: 3px; grid-template-rows: 14px 15px 11px 11px; align-items: center; }
.person dd { display: flex; }
.person dd span { margin-left: auto; padding-right: 5px; }
.phones { margin-left: 1px; display: grid; grid-template-columns: 30px 1fr; column-gap: 3px; grid-auto-rows: 10px; padding-top: 2px; }
.facts dt { font: var(--bold); text-align: right; }
.phones b { display: inline-block; width: 17px; }
.drs { display: grid; grid-template-columns: 156px 1fr; line-height: 12px; }
.row-prov { display: grid; grid-template-columns: 162px 148px; column-gap: 8px; margin-top: 4px; }
.case { height: 80px; border-top: 0; padding-top: 1px; }
.case-grid { display: grid; grid-template-columns: 32px 130px 63px 96px; grid-auto-rows: 13px; row-gap: 3px; align-items: center; }
.case-grid .c3 { padding-left: 9px; }
.case-grid .r { padding-left: 12px; }
.sts { background: var(--panel); border-color: #2a3f60; font: bold 9px/11px "Liberation Sans", sans-serif; }
.notes { display: grid; grid-template-columns: 129px 96px 36px; justify-content: start; column-gap: 41px; }
.notes .field label { line-height: 12px; }
.notes textarea { height: 34px; }
.notes fieldset { margin: 0 0 0 -22px; padding: 0; border: 0; min-width: 0; }
.notes fieldset label { display: flex; align-items: center; gap: 1px; height: 13px; padding-left: 2px; }
.notes legend { margin-bottom: 4px; }
.remind { margin-top: 4px; height: 50px; padding-top: 1px; }
.remind-top { display: grid; grid-template-columns: 149px 1fr; align-items: center; height: 14px; font: var(--bold); color: #00008b; }
.remind-top label { display: flex; align-items: center; gap: 5px; }
.remind-row { display: grid; grid-template-columns: 61px 56px 31px 50px; justify-content: start; column-gap: 16px; margin-top: 6px; }
.remind-row .field:nth-child(4) { padding-left: 9px; }
.drop { position: relative; }
.menu { position: absolute; z-index: 2; top: 100%; left: 0; width: 60px; border: 1px solid #555; background: #fff; list-style: none; line-height: 11px; }
.menu li { padding-left: 1px; }
.menu [aria-selected] { background: #3399f5; color: #fff; }
.ref { margin-top: 4px; height: 68px; padding-top: 13px; padding-right: 10px; }
.ref-top { display: flex; justify-content: space-between; padding-left: 36px; height: 14px; }
.ref-top select { width: 88px; padding-left: 24px; }
.pending { width: 57px; border: 1px solid #2a3f60; font: var(--bold); }
.ref-grid { display: grid; grid-template-columns: 42px 143px 27px 1fr; grid-template-rows: 13px 13px; row-gap: 4px; margin-top: 4px; }
.ref-grid .wide { grid-column: 1 / 3; }
.ref-grid .ref-note { padding-left: 5px; grid-column: 3; }
.ref-grid textarea { grid-column: 4; grid-row: 1 / 3; height: 30px; }
.ref-grid .ref-dr { grid-column: 1; grid-row: 2; white-space: nowrap; }
#refdr { grid-column: 2; grid-row: 2; }
.ins { margin-top: 6px; height: 86px; border: 1px solid var(--line); background: #fff; display: flex; flex-direction: column; }
.ins table { width: 100%; table-layout: fixed; border-collapse: collapse; }
.ins th { height: 13px; padding: 0 2px; text-align: left; font: var(--bold); background: linear-gradient(#fff, #dcdad4); border-right: 1px solid #bbb; border-bottom: 1px solid #aaa; }
.ins td { height: 16px; padding: 0 2px; }
.ins .num { text-align: right; padding-right: 6px; }
.ins td input { display: block; }
.k1 { width: 15px; } .k2 { width: 12px; } .k4 { width: 63px; } .k5 { width: 41px; } .k6 { width: 54px; } .k7 { width: 26px; }
.ins-links { margin-top: auto; display: flex; gap: 8px; padding: 0 0 1px 7px; }
.ins-links a { display: flex; align-items: center; gap: 1px; color: #1a4fa0; text-decoration: none; }
.ins-links svg { width: 13px; height: 12px; }
.hscroll { display: flex; height: 12px; background: #f0f0f0; }
.hscroll .lt, .hscroll .rt { width: 13px; background: var(--arr) center / 10px 10px no-repeat; transform: rotate(-90deg); }
.hscroll .rt { transform: rotate(90deg); margin-left: auto; }
.hscroll .thumb { width: 60%; background: #cdcdcd; }
.tasks { width: 110px; margin-top: 3px; border: 1px solid var(--line); background: linear-gradient(#a9caf3, #fff); padding: 1px 3px 4px; display: flex; flex-direction: column; }
.tasks h3 { font: bold 9px/12px "Liberation Sans", sans-serif; color: #00008b; }
.tasks > label { padding-left: 1px; line-height: 12px; }
.tasks > select, .tasks > input { width: 102px; height: 14px; margin-bottom: 6px; flex: none; }
.task-buttons { margin: 67px 0 0 21px; display: grid; gap: 3px; }
.ok-buttons { margin: auto 0 0 21px; display: grid; gap: 2px; }
.tasks button { width: 70px; height: 17px; display: flex; align-items: center; border: 1px solid #98b4dc; background: linear-gradient(#f4f4f4, #e2e2e2); font: bold 9px/12px "Liberation Sans", sans-serif; padding: 0 2px 0 1px; }
.tasks button svg { width: 12px; height: 12px; }
.tasks button span { flex: 1; text-align: center; }
.tasks button .l { padding-right: 12px; }
.tasks .ok { border-color: #4a9cf0; }
.down-tri { display: inline-block; margin: 0 0 2px 4px; border: 4px solid transparent; border-top-color: #00309c; border-bottom: 0; }
```
